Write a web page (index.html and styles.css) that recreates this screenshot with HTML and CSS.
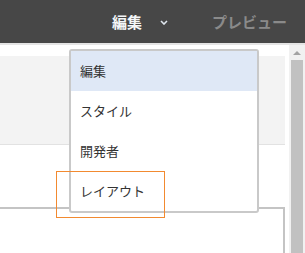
FILE: index.html
```html
<!DOCTYPE html>
<html lang="ja">
<head>
<meta charset="utf-8">
<link rel="stylesheet" href="styles.css">
</head>
<body>
<header class="topbar">
  <div class="tab tab-edit">編集
    <svg class="chev" width="8" height="5" viewBox="0 0 8 5"><path d="M1 1 L4 4 L7 1" fill="none" stroke="#dfe6ee" stroke-width="1.6"/></svg>
  </div>
  <div class="tab tab-preview">プレビュー</div>
</header>
<div class="main">
  <div class="content">
    <div class="band"></div>
    <div class="spacer"></div>
    <div class="box"></div>
  </div>
  <div class="scrollbar">
    <div class="arrow"></div>
    <div class="thumb"></div>
  </div>
</div>
<ul class="menu">
  <li class="item active">編集</li>
  <li class="item">スタイル</li>
  <li class="item">開発者</li>
  <li class="item">レイアウト</li>
</ul>
<div class="highlight"></div>
</body>
</html>
```
FILE: styles.css
```css
html, body {
  margin: 0;
  padding: 0;
  height: 100%;
  overflow: hidden;
  background: #fff;
  font-family: "Noto Sans CJK JP", "Noto Sans", sans-serif;
}
.topbar {
  height: 43px;
  background: #474747;
  border-bottom: 2px solid #e4e4e4;
  display: flex;
  justify-content: flex-end;
  align-items: center;
  padding-right: 18px;
}
.tab {
  font-size: 15px;
  font-weight: 700;
  line-height: 20px;
  display: flex;
  align-items: center;
}
.tab-edit { color: #f4f6f8; }
.chev { margin-left: 18px; margin-top: 1px; }
.tab-preview { color: #8a8a8a; margin-left: 44px; }
.main {
  display: flex;
  height: 208px;
}
.content {
  width: 285px;
  display: flex;
  flex-direction: column;
  padding-top: 11px;
}
.band {
  height: 88px;
  background: #f3f3f3;
  border-bottom: 1px solid #e2e2e2;
}
.spacer { height: 62px; }
.box {
  flex: 1;
  margin-left: -4px;
  border-top: 2px solid #c4c4c4;
  border-right: 2px solid #c4c4c4;
}
.scrollbar {
  margin-left: 4px;
  width: 16px;
  background: #f1f1f1;
  display: flex;
  flex-direction: column;
  align-items: center;
}
.arrow {
  margin-top: 6px;
  width: 0;
  height: 0;
  border-left: 4px solid transparent;
  border-right: 4px solid transparent;
  border-bottom: 4px solid #a3a3a3;
}
.thumb {
  margin-top: 5px;
  width: 12px;
  flex: 1;
  background: #c1c1c1;
}
.menu {
  position: absolute;
  left: 69px;
  top: 49px;
  width: 186px;
  margin: 0;
  padding: 0;
  list-style: none;
  background: #fff;
  border: 2px solid #c9c9c9;
  border-radius: 3px;
}
.item {
  height: 40px;
  line-height: 40px;
  padding-left: 9px;
  font-size: 13px;
  color: #333;
}
.item.active { background: #dfe8f6; }
.highlight {
  position: absolute;
  left: 56px;
  top: 171px;
  width: 107px;
  height: 45px;
  border: 1px solid #f28a30;
}
```
